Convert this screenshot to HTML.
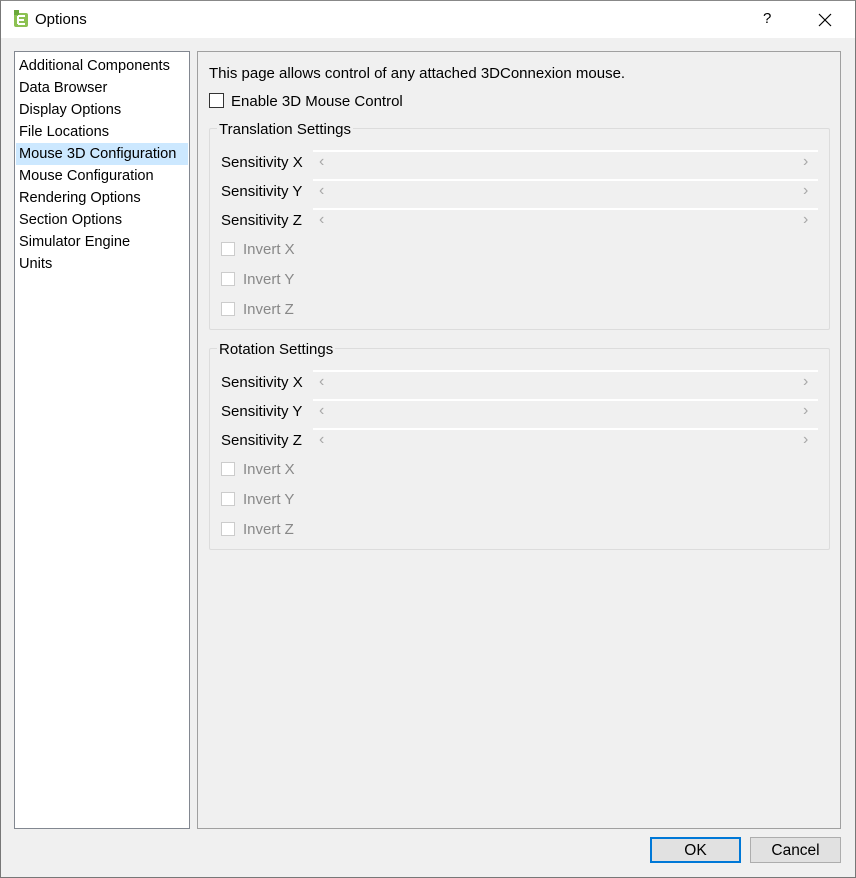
<!DOCTYPE html>
<html><head><style>
*{margin:0;padding:0;box-sizing:border-box}
body{width:856px;height:878px;overflow:hidden;background:#f0f0f0;font-family:"Liberation Sans",sans-serif;font-size:15px;color:#000;position:relative}
.abs{position:absolute;white-space:nowrap}
#frame{position:absolute;left:0;top:0;width:856px;height:878px;border:1px solid #777;border-top-color:#888}
#title{position:absolute;left:1px;top:1px;width:854px;height:37px;background:#fff}
.list{position:absolute;left:14px;top:51px;width:176px;height:778px;background:#fff;border:1px solid #828790;font-size:14.6px}
.list div{height:22px;line-height:22px;padding-left:4px;white-space:nowrap}
.list .sel{background:#cce8ff;margin:0 1px 0 1px;padding-left:3px}
.panel{position:absolute;left:197px;top:51px;width:644px;height:778px;border:1px solid #a0a0a0}
.gb{position:absolute;left:209px;width:621px;height:202px;border:1px solid #dcdcdc;border-radius:2px}
.gbt{position:absolute;background:#f0f0f0;padding:0 2px;left:217px;line-height:18px}
.lbl{position:absolute;left:221px;white-space:nowrap}
.sl{position:absolute;left:313px;width:505px;height:2px;background:#fff}
.arr{position:absolute;color:#a8a8a8;font-size:16px}
.cb{position:absolute;width:14px;height:14px;border:1px solid #ccc;background:#fff}
.dis{position:absolute;left:243px;color:#888}
.btn{position:absolute;top:837px;width:91px;height:26px;background:#e1e1e1;border:1px solid #adadad;text-align:center;line-height:26px;font-size:15.5px}
</style></head><body>
<div id="title"></div>
<svg class="abs" style="left:13px;top:10px" width="16" height="18" viewBox="0 0 16 18"><rect x="1" y="3" width="14" height="14" rx="2" fill="#8cc152"/><rect x="1" y="0" width="5" height="5" fill="#6aa83a"/><path d="M5 6h7M5 10h6M5 14h7M5 6v8" stroke="#fff" stroke-width="2"/></svg>
<div class="abs" style="left:35px;top:11px;font-size:15px">Options</div>
<div class="abs" style="left:763px;top:10px;font-size:15px">?</div>
<svg class="abs" style="left:818px;top:13px" width="14" height="14"><path d="M1 1L13 13M13 1L1 13" stroke="#000" stroke-width="1.2"/></svg>

<div class="list" style="padding-top:3px">
<div>Additional Components</div><div>Data Browser</div><div>Display Options</div><div>File Locations</div><div class="sel">Mouse 3D Configuration</div><div>Mouse Configuration</div><div>Rendering Options</div><div>Section Options</div><div>Simulator Engine</div><div>Units</div>
</div>
<div class="panel"></div>
<div class="abs" style="left:209px;top:65px">This page allows control of any attached 3DConnexion mouse.</div>
<div class="cb" style="left:209px;top:93px;border-color:#333;width:15px;height:15px"></div>
<div class="abs" style="left:231px;top:93px">Enable 3D Mouse Control</div>

<div class="gb" style="top:128px"></div>
<div class="gbt" style="top:121px">Translation Settings</div>
<div class="gb" style="top:348px"></div>
<div class="gbt" style="top:341px">Rotation Settings</div>

<div class="lbl" style="top:154px">Sensitivity X</div>
<div class="lbl" style="top:183px">Sensitivity Y</div>
<div class="lbl" style="top:212px">Sensitivity Z</div>
<div class="sl" style="top:150px"></div><div class="sl" style="top:179px"></div><div class="sl" style="top:208px"></div>
<div class="arr" style="left:319px;top:153px">&lsaquo;</div><div class="arr" style="left:803px;top:153px">&rsaquo;</div>
<div class="arr" style="left:319px;top:182px">&lsaquo;</div><div class="arr" style="left:803px;top:182px">&rsaquo;</div>
<div class="arr" style="left:319px;top:211px">&lsaquo;</div><div class="arr" style="left:803px;top:211px">&rsaquo;</div>
<div class="cb" style="left:221px;top:242px"></div><div class="dis" style="top:241px">Invert X</div>
<div class="cb" style="left:221px;top:272px"></div><div class="dis" style="top:271px">Invert Y</div>
<div class="cb" style="left:221px;top:302px"></div><div class="dis" style="top:301px">Invert Z</div>

<div class="lbl" style="top:374px">Sensitivity X</div>
<div class="lbl" style="top:403px">Sensitivity Y</div>
<div class="lbl" style="top:432px">Sensitivity Z</div>
<div class="sl" style="top:370px"></div><div class="sl" style="top:399px"></div><div class="sl" style="top:428px"></div>
<div class="arr" style="left:319px;top:373px">&lsaquo;</div><div class="arr" style="left:803px;top:373px">&rsaquo;</div>
<div class="arr" style="left:319px;top:402px">&lsaquo;</div><div class="arr" style="left:803px;top:402px">&rsaquo;</div>
<div class="arr" style="left:319px;top:431px">&lsaquo;</div><div class="arr" style="left:803px;top:431px">&rsaquo;</div>
<div class="cb" style="left:221px;top:462px"></div><div class="dis" style="top:461px">Invert X</div>
<div class="cb" style="left:221px;top:492px"></div><div class="dis" style="top:491px">Invert Y</div>
<div class="cb" style="left:221px;top:522px"></div><div class="dis" style="top:521px">Invert Z</div>

<div class="btn" style="left:650px;border:2px solid #0078d7;line-height:24px">OK</div>
<div class="btn" style="left:750px">Cancel</div>
<div id="frame"></div>
</body></html>
